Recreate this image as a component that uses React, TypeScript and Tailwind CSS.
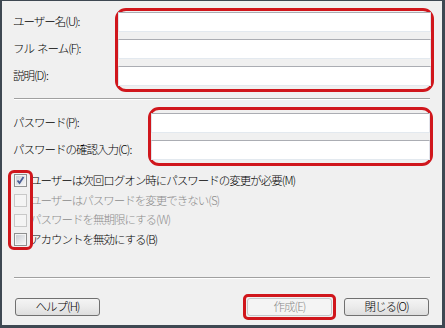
import React from "react";

const font = { fontFamily: '"Noto Sans CJK JP", "Noto Sans", sans-serif' };

function TextField() {
  return (
    <div className="h-[20px] w-full bg-white border border-t-[#abadb3] border-x-[#e2e3ea] border-b-[#e3e9ef]" />
  );
}

function Separator() {
  return <div className="mx-[12px] border-t border-t-[#a0a0a0] border-b border-b-white" />;
}

type CheckProps = { label: string; checked?: boolean; disabled?: boolean };

function CheckRow({ label, checked, disabled }: CheckProps) {
  return (
    <div className="h-[19.67px] flex items-center">
      <div
        className={
          "w-[13px] h-[13px] flex items-center justify-center border " +
          (disabled ? "border-[#c8c8c8] bg-[#f4f4f4]" : "border-[#8e8f8f] bg-[#f4f4f4]")
        }
      >
        {!disabled && (
          <div className="w-[9px] h-[9px] bg-gradient-to-br from-[#cbcfd5] to-[#f6f6f6] flex items-center justify-center">
            {checked && (
              <svg width="9" height="9" viewBox="0 0 9 9">
                <path d="M1.5 4.5 L3.5 7 L7.5 1" fill="none" stroke="#4a5f97" strokeWidth="1.8" />
              </svg>
            )}
          </div>
        )}
      </div>
      <span
        className={"ml-[3px] text-[11.5px] font-light tracking-[-1px] leading-none " + (disabled ? "text-[#8d8d8d]" : "text-black")}
      >
        {label}
      </span>
    </div>
  );
}

function Button({ label, disabled }: { label: string; disabled?: boolean }) {
  return (
    <div
      className={
        "w-[85px] h-[18px] rounded-[3px] border flex items-center justify-center text-[11.5px] font-light tracking-[-1px] " +
        (disabled
          ? "border-[#c4c7ca] bg-[#f4f4f4] text-[#8a8a8a]"
          : "border-[#707070] bg-gradient-to-b from-[#f4f4f4] via-[#ebebeb] to-[#dddddd] text-black")
      }
    >
      {label}
    </div>
  );
}

export default function App() {
  return (
    <div
      style={font}
      className="w-[445px] h-[328px] bg-[#f0f0f0] border-[#3e4852] border-t border-l-2 border-r-[3px] border-b-[3px] flex flex-col text-black"
    >
      {/* user info */}
      <div className="flex pt-[7px] pl-[11px] pr-[8px]">
        <div className="w-[102px] flex flex-col gap-[7px] pt-[4px] text-[11.5px] font-light tracking-[-1px]">
          <div className="h-[20px] flex items-center">ユーザー名(U):</div>
          <div className="h-[20px] flex items-center">フル&nbsp;&nbsp;ネーム(F):</div>
          <div className="h-[20px] flex items-center">説明(D):</div>
        </div>
        <div className="flex-1 border-[3px] border-[#d0161c] rounded-[11px] pt-[1px] pb-[3px] flex flex-col gap-[7px]">
          <TextField />
          <TextField />
          <TextField />
        </div>
      </div>

      <div className="mt-[6px]">
        <Separator />
      </div>

      {/* password */}
      <div className="flex pt-[7px] pl-[11px] pr-[9px]">
        <div className="w-[135px] flex flex-col gap-[7px] pt-[6px] text-[11.5px] font-light tracking-[-1px]">
          <div className="h-[20px] flex items-center">パスワード(P):</div>
          <div className="h-[20px] flex items-center">パスワードの確認入力(C):</div>
        </div>
        <div className="flex-1 border-[3px] border-[#d0161c] rounded-[11px] py-[3px] flex flex-col gap-[7px]">
          <TextField />
          <TextField />
        </div>
      </div>

      {/* options */}
      <div className="relative mt-[5px] pl-[12px] flex flex-col">
        <CheckRow label="ユーザーは次回ログオン時にパスワードの変更が必要(M)" checked />
        <CheckRow label="ユーザーはパスワードを変更できない(S)" disabled />
        <CheckRow label="パスワードを無期限にする(W)" disabled />
        <CheckRow label="アカウントを無効にする(B)" />
        <div className="absolute left-[6px] top-[-1px] w-[25px] h-[80px] border-[3px] border-[#d0161c] rounded-[6px]" />
      </div>

      <div className="mt-[27px]">
        <Separator />
      </div>

      {/* buttons */}
      <div className="flex items-center pl-[13px] pr-[13px] mt-[19px]">
        <Button label="ヘルプ(H)" />
        <div className="flex-1" />
        <div className="border-[3px] border-[#d0161c] rounded-[5px] p-[1px] -m-[4px]">
          <Button label="作成(E)" disabled />
        </div>
        <div className="w-[12px]" />
        <Button label="閉じる(O)" />
      </div>
    </div>
  );
}
